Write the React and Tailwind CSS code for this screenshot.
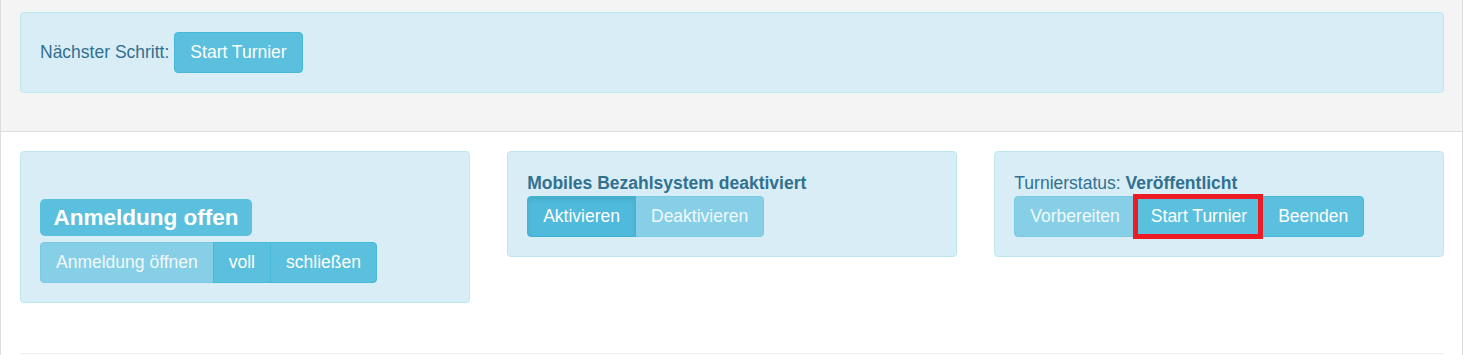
import React from "react";

function Btn({ children, variant = "normal", pos = "mid", className = "" }) {
  const base =
    "relative h-[41px] px-[15px] border text-white text-[17.5px] leading-[25px] flex items-center justify-center -ml-px first:ml-0";
  const rounded =
    pos === "first"
      ? "rounded-l-[4px]"
      : pos === "last"
      ? "rounded-r-[4px]"
      : pos === "only"
      ? "rounded-[4px]"
      : "";
  const color =
    variant === "disabled"
      ? "bg-[#5bc0de] border-[#46b8da] opacity-65"
      : variant === "active"
      ? "bg-[#4fbadb] border-[#3fb2d6] shadow-[inset_0_3px_5px_rgba(0,0,0,0.08)] z-10"
      : "bg-[#5bc0de] border-[#46b8da]";
  return <div className={`${base} ${rounded} ${color} ${className}`}>{children}</div>;
}

export default function App() {
  return (
    <div
      className="w-[1463px] h-[355px] bg-white border-x border-[#dddddd] text-[17.5px] leading-[25px] text-[#333]"
      style={{ fontFamily: '"Liberation Sans", Arial, sans-serif' }}
    >
      {/* Top section */}
      <div className="bg-[#f4f4f4] border-b border-[#dddddd] pt-[12px] pb-[38px] pl-[19px] pr-[18px]">
        <div className="h-[81px] bg-[#d9edf7] border border-[#bce8f1] rounded-[4px] px-[19px] flex items-center text-[#31708f]">
          <span className="mr-[6px]">Nächster Schritt:</span>
          <Btn pos="only">Start Turnier</Btn>
        </div>
      </div>

      {/* Lower section */}
      <div className="pt-[19px] pl-[19px] pr-[18px]">
        <div className="grid grid-cols-3 gap-x-[37.5px] items-start">
          {/* Left panel */}
          <div className="bg-[#d9edf7] border border-[#bce8f1] rounded-[4px] p-[19px] text-[#31708f]">
            <div className="mt-[28px] mb-[6px] flex">
              <span className="inline-block h-[37px] leading-[37px] px-[13.5px] rounded-[5px] bg-[#5bc0de] text-white font-bold text-[22.5px]">
                Anmeldung offen
              </span>
            </div>
            <div className="flex">
              <Btn pos="first" variant="disabled">Anmeldung öffnen</Btn>
              <Btn pos="mid">voll</Btn>
              <Btn pos="last">schließen</Btn>
            </div>
          </div>

          {/* Middle panel */}
          <div className="bg-[#d9edf7] border border-[#bce8f1] rounded-[4px] p-[19px] text-[#31708f]">
            <div className="font-bold">Mobiles Bezahlsystem deaktiviert</div>
            <div className="flex">
              <Btn pos="first" variant="active">Aktivieren</Btn>
              <Btn pos="last" variant="disabled">Deaktivieren</Btn>
            </div>
          </div>

          {/* Right panel */}
          <div className="bg-[#d9edf7] border border-[#bce8f1] rounded-[4px] p-[19px] text-[#31708f]">
            <div>
              Turnierstatus: <span className="font-bold">Veröffentlicht</span>
            </div>
            <div className="flex">
              <Btn pos="first" variant="disabled">Vorbereiten</Btn>
              <Btn pos="mid" className="z-10">
                Start Turnier
                <span className="pointer-events-none absolute -top-[3px] -bottom-[3px] -left-[3px] -right-[1px] border-[5px] border-[#ec1c24]"></span>
              </Btn>
              <Btn pos="last">Beenden</Btn>
            </div>
          </div>
        </div>
        <div className="mt-[50px] border-t border-[#eeeeee]"></div>
      </div>
    </div>
  );
}
